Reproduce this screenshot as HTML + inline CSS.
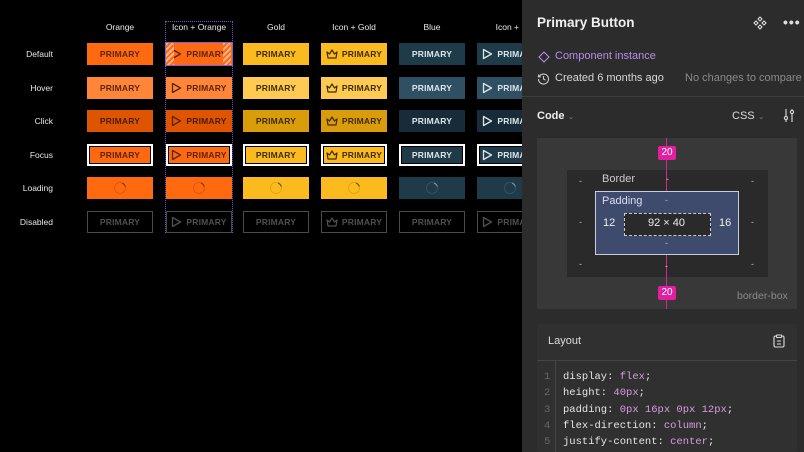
<!DOCTYPE html><html><head><meta charset="utf-8"><style>
*{box-sizing:border-box;margin:0;padding:0}
body{width:804px;height:452px;background:#000;position:relative;overflow:hidden;font-family:"Liberation Sans",sans-serif}
.h{position:absolute;top:22px;width:66px;text-align:center;color:#e8e8e8;font-size:8.5px}
.r{position:absolute;left:0;width:53px;text-align:right;color:#e8e8e8;font-size:8.5px}
.b{position:absolute;width:66px;height:22px;display:flex;align-items:center;justify-content:center;font-size:8.5px;font-weight:bold;letter-spacing:.2px;gap:4px}
.b svg{flex:none}
.o{background:#ff6a10;color:#5c2408}.oh{background:#ff8638;color:#5c2408}.oc{background:#de5400;color:#4a1d04}
.g{background:#fbbb1e;color:#3f2c00}.gh{background:#ffca52;color:#3f2c00}.gc{background:#d99c0a;color:#3f2c00}
.u{background:#1f3a48;color:#dce4ea}.uh{background:#2f5063;color:#dce4ea}.uc{background:#172c38;color:#dce4ea}
.f{border:2px solid #fff;box-shadow:inset 0 0 0 1px #000}
.d{border:1px solid #4a4a4a;color:#505050;background:#000}
.p{position:absolute;left:522px;top:0;width:282px;height:452px;background:#2c2c2c;color:#e6e6e6}
.p *{position:absolute}
.code{font-family:"Liberation Mono",monospace;font-size:10.5px;color:#e6e6e6}
.k{position:static!important;color:#d79be0}
</style></head><body>
<div class="h" style="left:87px">Orange</div>
<div class="h" style="left:166px">Icon + Orange</div>
<div class="h" style="left:243px">Gold</div>
<div class="h" style="left:321px">Icon + Gold</div>
<div class="h" style="left:399px">Blue</div>
<div class="h" style="left:477px;width:80px">Icon + Blue</div>
<div class="r" style="top:49px">Default</div>
<div class="r" style="top:83px">Hover</div>
<div class="r" style="top:116px">Click</div>
<div class="r" style="top:150px">Focus</div>
<div class="r" style="top:183px">Loading</div>
<div class="r" style="top:217px">Disabled</div>
<div style="position:absolute;left:165px;top:21px;width:68px;height:212px;border:1px dotted #7b4fd0"></div>
<div id="btns"></div>
<script>
var cols=[87,166,243,321,399,477],rows=[43,77,110,144,177,211];
var play=function(c){return '<svg width="11" height="12" viewBox="0 0 11 12"><path d="M1.5 1.5L9.5 6L1.5 10.5Z" fill="none" stroke="'+c+'" stroke-width="1.3" stroke-linejoin="round"/></svg>'};
var crown=function(c){return '<svg width="12" height="10" viewBox="0 0 12 10"><path d="M1 3L3.5 5L6 1L8.5 5L11 3L10 9H2Z" fill="none" stroke="'+c+'" stroke-width="1.2" stroke-linejoin="round"/></svg>'};
var spin=function(c,a){return '<svg width="14" height="14" viewBox="0 0 14 14"><circle cx="7" cy="7" r="5.5" fill="none" stroke="'+c+'" stroke-width="0.8"/><path d="M9 2a5.5 5.5 0 0 1 3.3 3.5" fill="none" stroke="'+a+'" stroke-width="1.1"/></svg>'};
var fam=[['o','oh','oc','o','#5c2408','#e0520a','#7a3008'],['g','gh','gc','g','#3f2c00','#d9a010','#6a4a00'],['u','uh','uc','u','#dce4ea','#3a5564','#8a9aa4']];
var h='';
for(var c=0;c<6;c++){var F=fam[Math.floor(c/2)],ic=c%2;
for(var r=0;r<6;r++){var cls,cont,x=cols[c],y=rows[r];
var icon=ic?(c==3?crown:play):null;
if(r<4){cls=F[r]+(r==3?' f':'');cont=(icon?icon(F[4]):'')+'PRIMARY';}
else if(r==4){cls=F[0];cont=spin(F[5],F[6]);}
else{cls='d';cont=(icon?icon('#505050'):'')+'PRIMARY';}
h+='<div class="b '+cls+'" style="left:'+x+'px;top:'+y+'px;">'+cont+'</div>';}}
document.getElementById('btns').innerHTML=h;
</script>
<div style="position:absolute;left:166px;top:43px;width:8px;height:22px;background:repeating-linear-gradient(135deg,#f4b490 0 2px,#ff6a10 2px 4px)"></div>
<div style="position:absolute;left:223px;top:43px;width:8px;height:22px;background:repeating-linear-gradient(135deg,#f4b490 0 2px,#ff6a10 2px 4px)"></div>
<div style="position:absolute;left:165px;top:42px;width:68px;height:24px;border:1px solid #8a5ae0"></div>

<div class="p">
<div style="left:15px;top:15px;font-size:13.5px;font-weight:bold;color:#f0f0f0">Primary Button</div>
<svg style="left:231px;top:16px" width="14" height="14" viewBox="0 0 14 14" fill="none" stroke="#ddd" stroke-width="1.1"><path d="M7 1l2 2-2 2-2-2zM7 9l2 2-2 2-2-2zM3 5l2 2-2 2-2-2zM11 5l2 2-2 2-2-2z"/></svg>
<div style="left:261px;top:14px;font-size:14px;font-weight:bold;letter-spacing:1px;color:#ddd">•••</div>
<svg style="left:16px;top:51px" width="12" height="12" viewBox="0 0 12 12"><path d="M6 1L11 6L6 11L1 6Z" fill="none" stroke="#b48ae8" stroke-width="1.1"/></svg>
<div style="left:33px;top:50px;font-size:11px;color:#b98de8">Component instance</div>
<svg style="left:15px;top:72px" width="13" height="13" viewBox="0 0 13 13" fill="none" stroke="#ccc" stroke-width="1.1"><path d="M2.2 4.5A5 5 0 1 1 1.5 7"/><path d="M1.5 2.5v2.3h2.3"/><path d="M6.5 4v3l2 1.2"/></svg>
<div style="left:33px;top:72px;font-size:11px;color:#d8d8d8">Created 6 months ago</div>
<div style="left:163px;top:72px;font-size:11px;color:#8a8a8a">No changes to compare</div>
<div style="left:0;top:96px;width:282px;height:1px;background:#3d3d3d"></div>
<div style="left:15px;top:110px;font-size:11px;font-weight:bold;color:#eee">Code <span style="position:static;color:#777;font-weight:normal;font-size:8px">⌄</span></div>
<div style="left:210px;top:110px;font-size:11px;color:#ddd">CSS <span style="position:static;color:#777;font-size:8px">⌄</span></div>
<svg style="left:261px;top:108px" width="12" height="14" viewBox="0 0 12 14" fill="none" stroke="#ddd" stroke-width="1.1"><path d="M3 1v13M9 1v13"/><circle cx="3" cy="10" r="1.6" fill="#2c2c2c"/><circle cx="9" cy="4" r="1.6" fill="#2c2c2c"/></svg>
<div style="left:15px;top:138px;width:260px;height:171px;background:#383838"></div>
<div style="left:45px;top:170px;width:201px;height:107px;background:#2a2a2a"></div>
<div style="left:144px;top:138px;width:1px;height:171px;background:#d02a90"></div>
<div style="left:73px;top:191px;width:144px;height:64px;background:#3f4b6c;border:1px solid #c8cde0"></div>
<div style="left:102px;top:213px;width:87px;height:23px;background:#2a2a2a;border:1px dashed #ccc"></div>
<div style="left:136px;top:146px;width:18px;height:14px;background:#e21fa0;color:#fff;font-size:10px;text-align:center;line-height:14px;border-radius:2px">20</div>
<div style="left:136px;top:286px;width:18px;height:14px;background:#e21fa0;color:#fff;font-size:10px;text-align:center;line-height:14px;border-radius:2px">20</div>
<div style="left:80px;top:173px;font-size:11px;color:#ccc">Border</div>
<div style="left:80px;top:195px;font-size:11px;color:#dde">Padding</div>
<div style="left:81px;top:217px;font-size:11px;color:#eee">12</div>
<div style="left:197px;top:217px;font-size:11px;color:#eee">16</div>
<div style="left:126px;top:217px;font-size:11px;color:#eee">92 × 40</div>
<div style="left:57px;top:176px;font-size:9px;color:#bbb">-</div><div style="left:144px;top:174px;font-size:9px;color:#bbb">-</div><div style="left:229px;top:176px;font-size:9px;color:#bbb">-</div>
<div style="left:57px;top:217px;font-size:9px;color:#bbb">-</div><div style="left:229px;top:217px;font-size:9px;color:#bbb">-</div>
<div style="left:57px;top:259px;font-size:9px;color:#bbb">-</div><div style="left:143px;top:261px;font-size:9px;color:#bbb">-</div><div style="left:229px;top:259px;font-size:9px;color:#bbb">-</div>
<div style="left:143px;top:195px;font-size:9px;color:#bbb">-</div><div style="left:143px;top:238px;font-size:9px;color:#bbb">-</div>
<div style="left:215px;top:290px;font-size:10.5px;color:#8a8a8a">border-box</div>
<div style="left:15px;top:324px;width:260px;height:128px;background:#303030;border-radius:3px"></div>
<div style="left:15px;top:360px;width:260px;height:1px;background:#444"></div>
<div style="left:26px;top:335px;font-size:11px;color:#ddd">Layout</div>
<svg style="left:251px;top:334px" width="12" height="14" viewBox="0 0 12 14" fill="none" stroke="#ddd" stroke-width="1.1"><rect x="1" y="2" width="10" height="11" rx="1.5"/><rect x="3.5" y="1" width="5" height="2.5" rx=".5" fill="#303030"/><path d="M4 7h4M4 10h4"/></svg>
<div style="left:33px;top:361px;width:1px;height:91px;background:#444"></div>
<div class="code" style="left:22px;top:369px;line-height:16.3px;color:#666">1<br>2<br>3<br>4<br>5</div>
<div class="code" style="left:41px;top:369px;line-height:16.3px">display: <span class="k">flex</span>;<br>height: <span class="k">40px</span>;<br>padding: <span class="k">0px 16px 0px 12px</span>;<br>flex-direction: <span class="k">column</span>;<br>justify-content: <span class="k">center</span>;</div>
</div>
</body></html>
